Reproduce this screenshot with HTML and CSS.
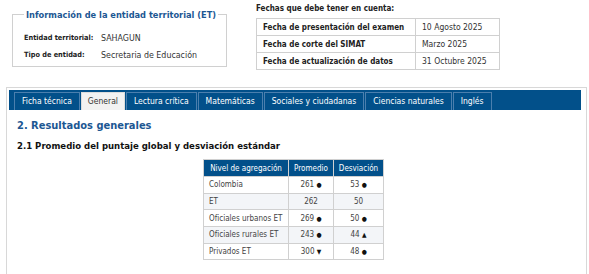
FILE: index.html
```html
<!DOCTYPE html>
<html lang="es">
<head>
    <meta charset="UTF-8">
    <title>Resultados</title>
    <link rel="stylesheet" href="styles.css">
</head>
<body>
    <div class="top">
        <fieldset class="info">
            <legend>Información de la entidad territorial (ET)</legend>
            <div class="fila"><b>Entidad territorial:</b><span>SAHAGUN</span></div>
            <div class="fila"><b>Tipo de entidad:</b><span>Secretaria de Educación</span></div>
        </fieldset>
        <div class="fechas">
            <p class="titulo">Fechas que debe tener en cuenta:</p>
            <table class="tfechas">
                <tr><th>Fecha de presentación del examen</th><td>10 Agosto 2025</td></tr>
                <tr><th>Fecha de corte del SIMAT</th><td>Marzo 2025</td></tr>
                <tr><th>Fecha de actualización de datos</th><td>31 Octubre 2025</td></tr>
            </table>
        </div>
    </div>

    <div class="panel">
        <ul class="tabs">
            <li>Ficha técnica</li>
            <li class="activo">General</li>
            <li>Lectura crítica</li>
            <li>Matemáticas</li>
            <li>Sociales y ciudadanas</li>
            <li>Ciencias naturales</li>
            <li>Inglés</li>
        </ul>
        <div class="contenido">
            <h2>2. Resultados generales</h2>
            <h3>2.1 Promedio del puntaje global y desviación estándar</h3>
            <table class="resultados">
                <tr><th class="nivel">Nivel de agregación</th><th class="prom">Promedio</th><th class="desv">Desviación</th></tr>
                <tr><td>Colombia</td><td class="c">261 <i>●</i></td><td class="c">53 <i>●</i></td></tr>
                <tr><td>ET</td><td class="c">262</td><td class="c">50</td></tr>
                <tr><td>Oficiales urbanos ET</td><td class="c">269 <i>●</i></td><td class="c">50 <i>●</i></td></tr>
                <tr><td>Oficiales rurales ET</td><td class="c">243 <i>●</i></td><td class="c">44 <i>▲</i></td></tr>
                <tr><td>Privados ET</td><td class="c">300 <i>▼</i></td><td class="c">48 <i>●</i></td></tr>
            </table>
        </div>
    </div>
</body>
</html>
```

FILE: styles.css
```css
*{
    margin: 0;
    padding: 0;
    box-sizing: border-box;
}
body{
    font-family: "DejaVu Sans", Verdana, sans-serif;
    font-stretch: condensed;
    font-size: 8.5px;
    color: #222;
    background: #fff;
    padding: 4px 2px 0 6px;
    white-space: nowrap;
    overflow: hidden;
    height: 274px;
}
.top{
    display: flex;
    align-items: flex-start;
}
.info{
    width: 215px;
    min-width: 0;
    height: 58px;
    margin: 5px 0 0 6px;
    border: 1px solid #d0d0d0;
    padding: 9px 0 0 11px;
}
.info legend{
    color: #1c5793;
    font-weight: bold;
    font-size: 9.2px;
    padding: 0 2px;
}
.fila{
    display: flex;
    height: 17px;
    align-items: center;
}
.fila b{
    width: 77px;
    font-size: 7.3px;
}
.fila span{
    font-size: 8.8px;
    color: #333;
}
.fechas{
    margin-left: 29px;
}
.titulo{
    font-weight: bold;
    font-size: 8px;
    height: 14px;
    line-height: 10px;
}
.tfechas{
    border-collapse: collapse;
    border: 1px solid #d0d0d0;
}
.tfechas th, .tfechas td{
    border: 1px solid #d0d0d0;
    height: 17px;
    text-align: left;
    padding: 0 6px;
}
.tfechas th{
    width: 159px;
    font-size: 8px;
}
.tfechas td{
    width: 84px;
    color: #333;
}
.panel{
    margin-top: 17px;
    border: 1px solid #d8d8d8;
    height: 200px;
    padding: 2px;
}
.tabs{
    list-style: none;
    display: flex;
    background: #02508a;
    height: 20px;
    padding: 2px 0 0 5px;
    width: 572px;
}
.tabs li{
    color: #fff;
    border: 1px solid #4b7fae;
    border-bottom: none;
    padding: 0 7px;
    line-height: 17px;
    margin-right: 1px;
}
.tabs li.activo{
    background: #f2f2f2;
    color: #333;
    border-color: #dcdcdc;
    padding: 0 6px;
}
.contenido{
    padding: 9px 8px;
}
h2{
    color: #1c5793;
    font-size: 11px;
    height: 21px;
    line-height: 14px;
}
h3{
    font-size: 9.5px;
    color: #111;
    height: 19px;
}
.resultados{
    border-collapse: collapse;
    margin-left: 186px;
    border: 1px solid #d0d0d0;
    font-size: 8px;
    table-layout: fixed;
}
.resultados th{
    background: #02508a;
    color: #fff;
    font-weight: normal;
    height: 17px;
    border: 1px solid #d0d0d0;
    padding: 0 4px;
}
.resultados th.nivel{
    width: 85px;
}
.resultados th.prom{
    width: 45px;
}
.resultados th.desv{
    width: 50px;
}
.resultados td{
    height: 16.7px;
    border: 1px solid #d0d0d0;
    padding: 0 5px;
    color: #444;
}
.resultados tr:nth-child(odd) td{
    background: #f3f5f8;
}
.resultados td.c{
    text-align: center;
}
.resultados i{
    font-style: normal;
    font-size: 6.5px;
    color: #111;
}
```
